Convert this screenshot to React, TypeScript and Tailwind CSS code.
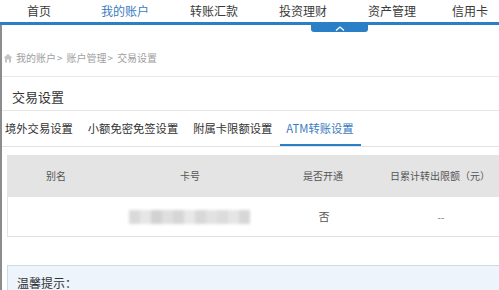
const navItems = [
  { label: "首页", ml: "ml-[27px]", active: false },
  { label: "我的账户", ml: "ml-[50px]", active: true },
  { label: "转账汇款", ml: "ml-[41px]", active: false },
  { label: "投资理财", ml: "ml-[41px]", active: false },
  { label: "资产管理", ml: "ml-[41px]", active: false },
  { label: "信用卡", ml: "ml-[36px]", active: false },
];

const blurBlocks = ["#dadada", "#e6e6e6", "#d2d2d2", "#dfdfdf", "#d6d6d6", "#e8e8e8", "#d8d8d8", "#e2e2e2", "#dcdcdc", "#e5e5e5", "#d7d7d7"];

const App = () => {
  return (
    <div
      className="relative w-[499px] h-[290px] overflow-hidden bg-white text-[#333]"
      style={{ fontFamily: '"Noto Sans CJK SC", "Noto Sans", sans-serif' }}
    >
      {/* top nav */}
      <nav className="flex items-center h-[22px] text-[12px] leading-none">
        {navItems.map((item) => (
          <span
            key={item.label}
            className={`${item.ml} whitespace-nowrap ${item.active ? "text-[#3b7bc0]" : "text-[#3a3a3a]"}`}
          >
            {item.label}
          </span>
        ))}
      </nav>
      <div className="h-[3px] bg-[#2a7fc6]" />

      {/* collapse tab */}
      <div className="absolute left-[311px] top-[25px] w-[57px] h-[7px] bg-[#2a7fc6] rounded-b-[3px] flex items-center justify-center">
        <svg width="10" height="5" viewBox="0 0 10 5">
          <path d="M1 4.5 L5 1 L9 4.5" stroke="#fff" strokeWidth="1.3" fill="none" />
        </svg>
      </div>

      <main className="border-l-2 border-[#8c8c8c] h-[265px]">
        {/* breadcrumb */}
        <div className="h-[52px] pt-[27px] border-b border-[#e8e8e8]">
          <div className="flex items-center h-[12px] text-[10px] text-[#a0a0a0] leading-none">
            <svg width="10" height="10" viewBox="0 0 10 10" className="ml-[1px]">
              <path d="M5 0.8 L0.6 5 H2 V9.5 H4 V6.6 H6 V9.5 H8 V5 H9.4 Z" fill="#c4c4c4" />
            </svg>
            <span className="ml-[3px]">我的账户</span>
            <span className="ml-[1px]">&gt;</span>
            <span className="ml-[4px]">账户管理</span>
            <span className="ml-[1px]">&gt;</span>
            <span className="ml-[4px]">交易设置</span>
          </div>
        </div>

        {/* title */}
        <div className="h-[34px] pt-[5px] flex items-center border-b border-[#e6e6e6]">
          <h2 className="ml-[10px] text-[13px] leading-none text-[#333]">交易设置</h2>
        </div>

        {/* tabs */}
        <div className="h-[36px] flex items-center border-b border-[#e2e2e2] pl-[3px] text-[11.3px] leading-none whitespace-nowrap">
          <span className="text-[#333]">境外交易设置</span>
          <span className="ml-[15px] text-[#333]">小额免密免签设置</span>
          <span className="ml-[15px] text-[#333]">附属卡限额设置</span>
          <span className="relative ml-[14px] h-full flex items-center text-[#3b7bc0]">
            ATM转账设置
            <span className="absolute -left-[6px] -right-[7px] bottom-0 h-[2px] bg-[#2a7fc6]" />
          </span>
        </div>

        {/* table */}
        <div className="ml-[5px] mt-[8px] w-[520px] text-[10px] leading-none">
          <div className="flex h-[42px] items-center bg-[#e4e4e4] text-[#555]">
            <div className="w-[98px] text-center">别名</div>
            <div className="w-[170px] text-center">卡号</div>
            <div className="w-[96px] text-center">是否开通</div>
            <div className="w-[138px] text-center">日累计转出限额（元）</div>
          </div>
          <div className="flex h-[40px] items-center border-l border-b border-[#e2e2e2] text-[#555]">
            <div className="w-[98px]" />
            <div className="w-[170px] flex items-center">
              <div className="ml-[23px] flex h-[14px] blur-[1.5px]">
                {blurBlocks.map((c, i) => (
                  <div key={i} className="w-[11px] h-full" style={{ backgroundColor: c }} />
                ))}
              </div>
            </div>
            <div className="w-[96px] text-center text-[11px]">否</div>
            <div className="w-[138px] text-center text-[#777]">--</div>
          </div>
        </div>

        {/* tips */}
        <div className="ml-[5px] mt-[28px] h-[40px] bg-[#edf4fc] border-t border-l border-[#cbdae7] pl-[9px] pt-[11px]">
          <p className="text-[12px] leading-none text-[#333]">温馨提示：</p>
        </div>
      </main>
    </div>
  );
};

export default App;
